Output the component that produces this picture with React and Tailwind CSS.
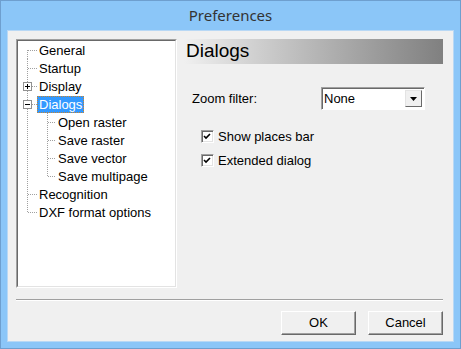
import React from "react";

const TREE = [
  { label: "General", level: 0, first: true },
  { label: "Startup", level: 0 },
  { label: "Display", level: 0, box: "plus" },
  { label: "Dialogs", level: 0, box: "minus", selected: true },
  { label: "Open raster", level: 1, first: true },
  { label: "Save raster", level: 1 },
  { label: "Save vector", level: 1 },
  { label: "Save multipage", level: 1, last: true },
  { label: "Recognition", level: 0 },
  { label: "DXF format options", level: 0, last: true },
];

const DOT = { stroke: "#a0a0a0", strokeWidth: 1, strokeDasharray: "1 1" };

function Connector({ item }) {
  const w = item.level === 0 ? 19 : 38;
  return (
    <svg width={w} height="18" className="shrink-0">
      {/* level 0 trunk */}
      <line x1="9.5" y1={item.level === 0 && item.first ? 9 : 0} x2="9.5" y2={item.level === 0 && item.last ? 9 : 18} {...DOT} />
      {item.level === 0 && <line x1="10" y1="9.5" x2="19" y2="9.5" {...DOT} />}
      {item.level === 1 && (
        <>
          <line x1="29.5" y1="0" x2="29.5" y2={item.last ? 9 : 18} {...DOT} />
          <line x1="30" y1="9.5" x2="38" y2="9.5" {...DOT} />
        </>
      )}
      {item.box && (
        <>
          <rect x="5.5" y="5.5" width="8" height="8" fill="#fff" stroke="#919191" />
          <line x1="7" y1="9.5" x2="12" y2="9.5" stroke="#000" />
          {item.box === "plus" && <line x1="9.5" y1="7" x2="9.5" y2="12" stroke="#000" />}
        </>
      )}
    </svg>
  );
}

function TreeRow({ item }) {
  return (
    <div className="flex h-[18px] items-center">
      <Connector item={item} />
      <span
        className={
          item.selected
            ? "h-[17px] leading-[15px] px-[1px] bg-[#3399ff] text-white border border-dotted border-[#c8842f]"
            : "h-[17px] leading-[17px] px-[2px] text-black"
        }
      >
        {item.label}
      </span>
    </div>
  );
}

function Checkbox({ label }) {
  return (
    <div className="flex items-center h-[13px] gap-[4px]">
      <div className="w-[13px] h-[13px] bg-white border-t border-l border-[#a0a0a0] border-r border-b border-r-white border-b-white shadow-[inset_1px_1px_0_#696969,inset_-1px_-1px_0_#e3e3e3] flex items-center justify-center">
        <svg width="9" height="9" viewBox="0 0 9 9">
          <path d="M1 4 L3 6 L7 2" stroke="#000" strokeWidth="1.6" fill="none" />
        </svg>
      </div>
      <span className="leading-[13px]">{label}</span>
    </div>
  );
}

function Button({ children }) {
  return (
    <button className="w-[75px] h-[24px] bg-[#f0f0f0] border border-t-white border-l-white border-r-[#696969] border-b-[#696969] shadow-[inset_-1px_-1px_0_#a0a0a0] text-black text-[13px]">
      {children}
    </button>
  );
}

export default function App() {
  return (
    <div className="w-[461px] h-[349px] bg-[#8bc6f8] border border-[#6e9fcf] flex flex-col font-['Liberation_Sans',Arial,sans-serif] text-[13px] text-black">
      <div className="h-[29px] flex items-center justify-center text-[15px] text-[#333] font-['Noto_Sans',sans-serif]">
        Preferences
      </div>

      <div className="mx-[6px] mb-[6px] flex-1 border border-[#b8d8f5] bg-[#f0f0f0] flex flex-col pt-[8px] pl-[8px] pr-[10px]">
        <div className="flex h-[249px] gap-[7px]">
          {/* tree */}
          <div className="w-[161px] border border-t-[#a0a0a0] border-l-[#a0a0a0] border-r-white border-b-white">
            <div className="h-full bg-white border border-t-[#696969] border-l-[#696969] border-r-[#e3e3e3] border-b-[#e3e3e3]">
              {TREE.map((item) => (
                <TreeRow key={item.label} item={item} />
              ))}
            </div>
          </div>

          {/* page */}
          <div className="flex-1 flex flex-col">
            <div className="h-[25px] bg-gradient-to-r from-[#f0f0f0] to-[#808080] flex items-center pl-[2px] text-[19px]">
              Dialogs
            </div>

            <div className="flex items-center mt-[23px] pl-[8px]">
              <span className="w-[129px]">Zoom filter:</span>
              <div className="w-[104px] h-[23px] bg-white border border-t-[#a0a0a0] border-l-[#a0a0a0] border-r-white border-b-white shadow-[inset_1px_1px_0_#696969] flex items-center pl-[2px] pr-[2px]">
                <span className="flex-1">None</span>
                <div className="w-[17px] h-[17px] bg-[#f0f0f0] border border-t-[#e3e3e3] border-l-[#e3e3e3] border-r-[#696969] border-b-[#696969] flex items-center justify-center">
                  <svg width="7" height="4" viewBox="0 0 7 4">
                    <path d="M0 0 H7 L3.5 4 Z" fill="#000" />
                  </svg>
                </div>
              </div>
            </div>

            <div className="flex flex-col gap-[11px] mt-[20px] pl-[17px]">
              <Checkbox label="Show places bar" />
              <Checkbox label="Extended dialog" />
            </div>
          </div>
        </div>

        <div className="mt-[11px] border-t border-t-[#a0a0a0] border-b border-b-white" />

        <div className="flex justify-end gap-[12px] mt-[10px]">
          <Button>OK</Button>
          <Button>Cancel</Button>
        </div>
      </div>
    </div>
  );
}
